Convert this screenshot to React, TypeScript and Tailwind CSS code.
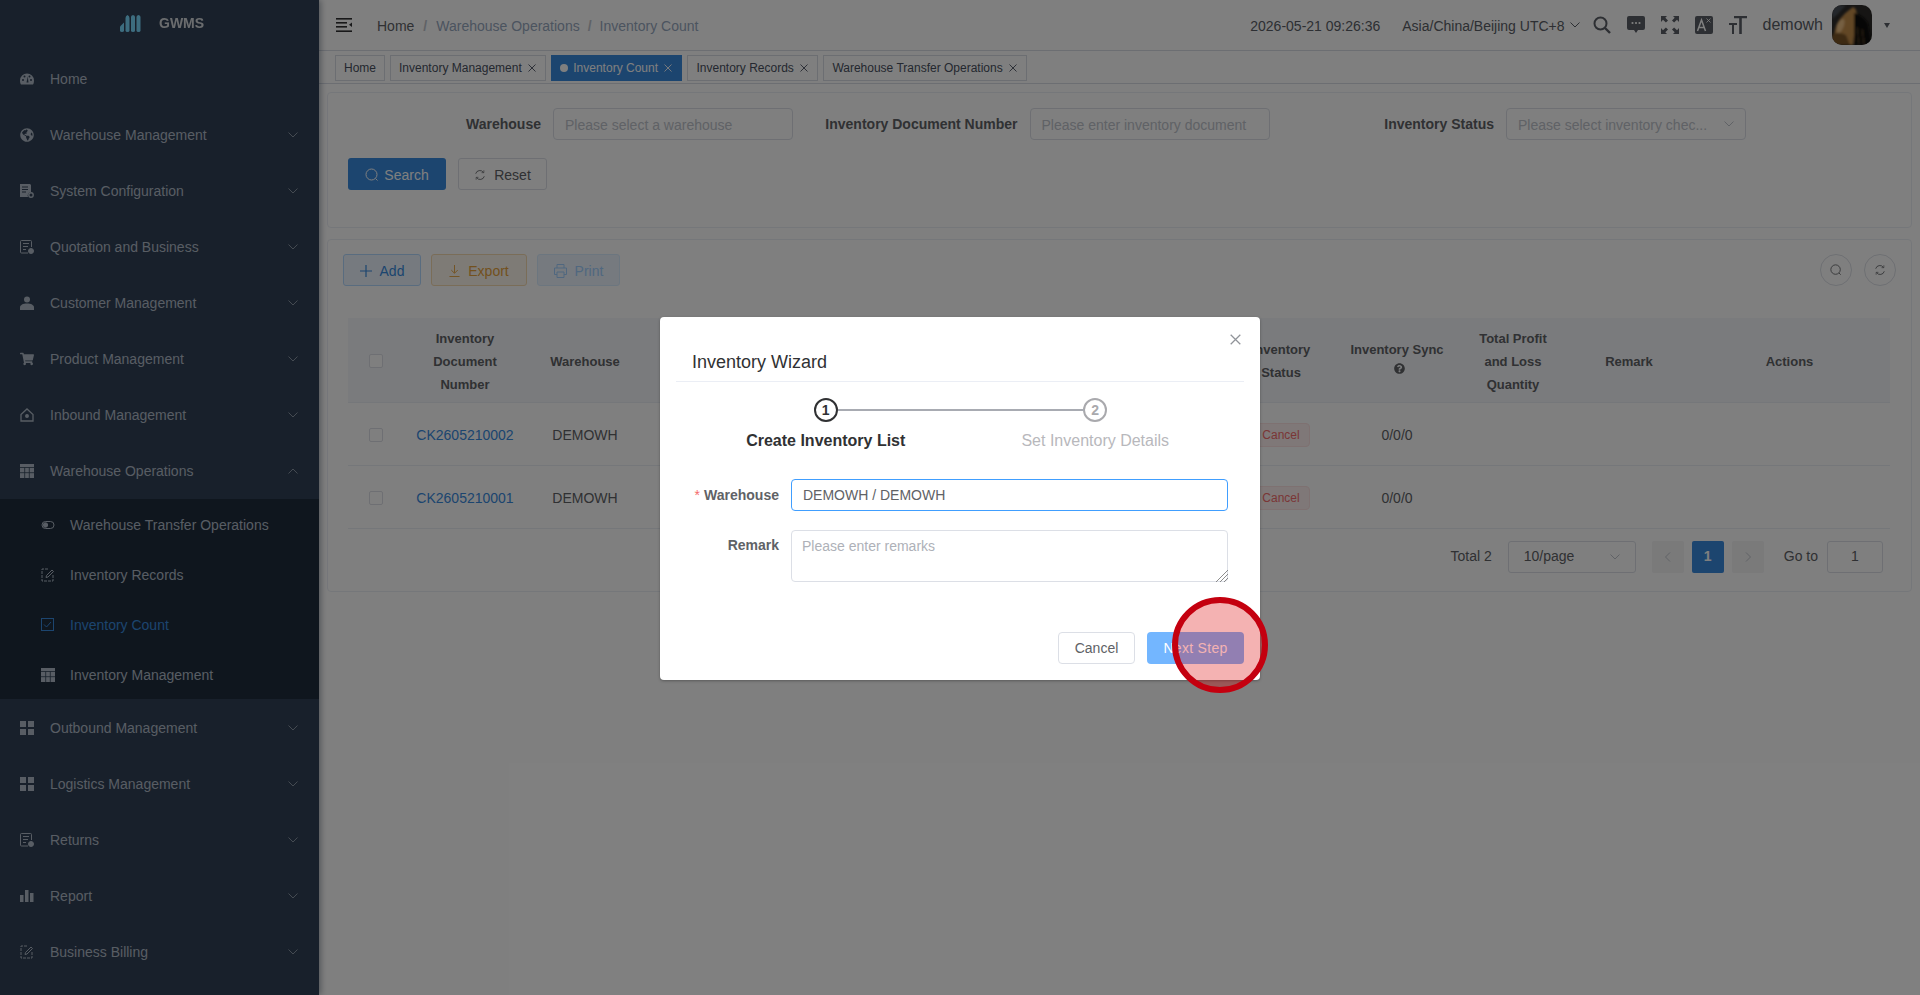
import { ReactNode } from "react";
import { FaGlobeAmericas, FaQuestionCircle, FaShoppingCart } from "react-icons/fa";

// small sidebar glyphs, all on a 14x14 box and drawn with currentColor
function DashIcon() {
  return (
    <svg width="14" height="14" viewBox="0 0 14 14">
      <path d="M7 1.5a7 7 0 0 0-7 7c0 1.5.3 3 1 4h12c.7-1 1-2.500 1-4a7 7 0 0 0-7-7z" fill="currentColor" />
      <circle cx="3" cy="8" r="1" fill="#304156" />
      <circle cx="4.500" cy="4.500" r="1" fill="#304156" />
      <circle cx="9.500" cy="4.500" r="1" fill="#304156" />
      <circle cx="11" cy="8" r="1" fill="#304156" />
      <path d="M7.800 4.500 6.500 10.500h2z" fill="#304156" />
    </svg>
  );
}
function ConfigIcon() {
  return (
    <svg width="14" height="14" viewBox="0 0 14 14">
      <path d="M0 0h10l1 1v7a3.500 3.500 0 0 0-3 5H0z" fill="currentColor" />
      <path d="M2 3h6M2 5.500h6M2 8h4" stroke="#304156" strokeWidth="1" />
      <circle cx="11" cy="11" r="2.200" fill="none" stroke="currentColor" strokeWidth="1.400" />
    </svg>
  );
}
function DocIcon() {
  return (
    <svg width="14" height="14" viewBox="0 0 14 14" fill="none" stroke="currentColor">
      <path d="M8 13H1.500a1 1 0 0 1-1-1V1.500a1 1 0 0 1 1-1h9a1 1 0 0 1 1 1V7" />
      <path d="M3 3.500h6M3 6.500h5M3 9.500h3" />
      <circle cx="11" cy="11" r="2.500" fill="currentColor" />
    </svg>
  );
}
function UserIcon() {
  return (
    <svg width="14" height="14" viewBox="0 0 14 14" fill="currentColor">
      <circle cx="7" cy="3.500" r="3" />
      <path d="M0 14v-2.500C0 9 3 7.500 7 7.500s7 1.500 7 4V14z" />
    </svg>
  );
}
function HouseIcon() {
  return (
    <svg width="14" height="14" viewBox="0 0 14 14" fill="none" stroke="currentColor" strokeWidth="1.300">
      <path d="M1 6.500 7 1l6 5.500V13H1z" />
      <circle cx="7" cy="8" r="1.300" fill="currentColor" />
    </svg>
  );
}
function TableIcon() {
  return (
    <svg width="14" height="14" viewBox="0 0 14 14">
      <path d="M0 0h14v14H0z" fill="currentColor" />
      <path d="M0 3.500h14M0 8.700h14M4.700 3.500V14M9.300 3.500V14" stroke="#304156" strokeWidth=".8" />
    </svg>
  );
}
function GridIcon() {
  return (
    <svg width="14" height="14" viewBox="0 0 14 14" fill="currentColor">
      <rect width="6" height="6" />
      <rect x="8" width="6" height="6" />
      <rect y="8" width="6" height="6" />
      <rect x="8" y="8" width="6" height="6" />
    </svg>
  );
}
function BarsIcon() {
  return (
    <svg width="14" height="14" viewBox="0 0 14 14" fill="currentColor">
      <rect x="0" y="6" width="3.500" height="7" />
      <rect x="5" y="1" width="3.500" height="12" />
      <rect x="10" y="4" width="3.500" height="9" />
    </svg>
  );
}
function EditIcon() {
  return (
    <svg width="14" height="14" viewBox="0 0 14 14" fill="none" stroke="currentColor">
      <path d="M7 1H1v12h11V7" strokeDasharray="3 1" />
      <path d="M5 9.500 5.500 7.500 11 2l1.500 1.500L7 9z" />
    </svg>
  );
}
function ToggleIcon() {
  return (
    <svg width="14" height="14" viewBox="0 0 14 14" fill="none" stroke="currentColor">
      <rect x="1" y="3.500" width="12" height="7" rx="3.500" />
      <circle cx="4.500" cy="7" r="2.200" fill="currentColor" />
    </svg>
  );
}
function CheckBoxIcon() {
  return (
    <svg width="14" height="14" viewBox="0 0 14 14" fill="none" stroke="currentColor">
      <rect x=".5" y=".5" width="12" height="12" />
      <path d="M3 6.500 5.500 9 10 4" />
    </svg>
  );
}
function Chevron({ up = false, className = "" }: { up?: boolean; className?: string }) {
  return (
    <svg width="10" height="6" viewBox="0 0 10 6" fill="none" stroke="currentColor" strokeWidth="1" className={className}>
      <path d={up ? "M.5 5.500 5 1l4.500 4.500" : "M.5.5 5 5 9.500.5"} />
    </svg>
  );
}
function SearchGlyph({ size = 14 }: { size?: number }) {
  return (
    <svg width={size} height={size} viewBox="0 0 14 14" fill="none" stroke="currentColor" strokeWidth="1">
      <circle cx="6.500" cy="6.500" r="5.500" />
      <path d="M10.500 10.500 12.500 12.500" />
    </svg>
  );
}
function RefreshGlyph({ size = 14 }: { size?: number }) {
  return (
    <svg width={size} height={size} viewBox="0 0 14 14" fill="none" stroke="currentColor" strokeWidth="1">
      <path d="M2 5.500A5 5 0 0 1 11 4M12 8.500A5 5 0 0 1 3 10" />
      <path d="M11.500 1.500V4.300H8.800M2.500 12.500V9.700h2.700" strokeWidth=".8" />
    </svg>
  );
}
function CloseGlyph({ size = 8 }: { size?: number }) {
  return (
    <svg width={size} height={size} viewBox="0 0 8 8" fill="none" stroke="currentColor" strokeWidth=".9">
      <path d="M.5.500l7 7M7.500.500l-7 7" />
    </svg>
  );
}

type MenuItem = { label: string; icon: ReactNode; arrow?: boolean };

const topMenu: MenuItem[] = [
  { label: "Home", icon: <DashIcon /> },
  { label: "Warehouse Management", icon: <FaGlobeAmericas size={14} />, arrow: true },
  { label: "System Configuration", icon: <ConfigIcon />, arrow: true },
  { label: "Quotation and Business", icon: <DocIcon />, arrow: true },
  { label: "Customer Management", icon: <UserIcon />, arrow: true },
  { label: "Product Management", icon: <FaShoppingCart size={14} />, arrow: true },
  { label: "Inbound Management", icon: <HouseIcon />, arrow: true },
];

const subMenu: (MenuItem & { active?: boolean })[] = [
  { label: "Warehouse Transfer Operations", icon: <ToggleIcon /> },
  { label: "Inventory Records", icon: <EditIcon /> },
  { label: "Inventory Count", icon: <CheckBoxIcon />, active: true },
  { label: "Inventory Management", icon: <TableIcon /> },
];

const bottomMenu: MenuItem[] = [
  { label: "Outbound Management", icon: <GridIcon />, arrow: true },
  { label: "Logistics Management", icon: <GridIcon />, arrow: true },
  { label: "Returns", icon: <DocIcon />, arrow: true },
  { label: "Report", icon: <BarsIcon />, arrow: true },
  { label: "Business Billing", icon: <EditIcon />, arrow: true },
];

function MenuRow({ item, open, low }: { item: MenuItem; open?: boolean; low?: boolean }) {
  return (
    <div className={`h-[56px] flex items-center pl-[20px] pr-[21px] text-[14px] text-[#b0bbc8] ${low ? "pt-[2px]" : ""}`}>
      <span className="w-[14px] h-[14px] mr-[16px] flex items-center justify-center shrink-0">{item.icon}</span>
      <span className="flex-1">{item.label}</span>
      {item.arrow ? <Chevron up={open} className="text-[#8a96a5]" /> : null}
    </div>
  );
}

function Sidebar() {
  return (
    <aside className="w-[319px] h-full shrink-0 bg-[#304156] overflow-hidden shadow-[2px_0_6px_rgba(0,21,41,0.35)] z-10">
      <div className="h-[51px] pb-[4px] pl-[120px] flex items-center gap-[17px]">
        <svg width="22" height="17" viewBox="0 0 22 17" fill="#7adaff">
          <path d="M0 15.500v-4L4 7.500v8q0 1.500-2 1.500t-2-1.500z" />
          <path d="M5.500 15.500V3q0-2 2-3 2 1 2 3v12.500q0 1.500-2 1.500t-2-1.500z" />
          <path d="M11 15.500V2q0-1.500 2-2 2 .500 2 2v13.500q0 1.500-2 1.500t-2-1.500z" />
          <path d="M16.500 15.500V2q0-1.500 2-2 2 .500 2 2v13.500q0 1.500-2 1.500t-2-1.500z" />
        </svg>
        <span className="text-[14px] font-bold text-white opacity-80">GWMS</span>
      </div>
      {topMenu.map((m) => (
        <MenuRow key={m.label} item={m} />
      ))}
      <MenuRow item={{ label: "Warehouse Operations", icon: <TableIcon />, arrow: true }} open />
      <div className="bg-[#1f2d3d]">
        {subMenu.map((m) => (
          <div
            key={m.label}
            className={`h-[50px] pt-[2px] flex items-center pl-[41px] text-[14px] ${m.active ? "text-[#388ade]" : "text-[#b0bbc8]"}`}
          >
            <span className="w-[14px] h-[14px] mr-[15px] flex items-center justify-center shrink-0">{m.icon}</span>
            {m.label}
          </div>
        ))}
      </div>
      {bottomMenu.map((m) => (
        <MenuRow key={m.label} item={m} low />
      ))}
    </aside>
  );
}

function Avatar() {
  return (
    <div className="w-[40px] h-[40px] ml-[9px] rounded-[10px] overflow-hidden shrink-0">
      <svg width="40" height="40" viewBox="0 0 40 40">
        <defs>
          <filter id="soft">
            <feGaussianBlur stdDeviation="0.9" />
          </filter>
        </defs>
        <rect width="40" height="40" fill="#2c2a28" />
        <g filter="url(#soft)">
          <path d="M0 0h14L6 9 0 14z" fill="#4a5056" />
          <path d="M3 40C1 30 3 20 8 14S16 6 21 2c4 2 4 6 3 12s-2 16-3 26z" fill="#c48e4c" />
          <path d="M5 20c2-4 4-6 6-6s2 5 0 9-4 6-6 4z" fill="#ecc084" />
          <path d="M0 40V30c4-3 10-2 14 0l4 10z" fill="#7a5428" />
          <path d="M22 8c5 1 10 4 14 10l4 22H22z" fill="#0e0c0a" />
          <path d="M25 22l2 18M30 24l2 16" stroke="#5a4426" strokeWidth="1" />
        </g>
      </svg>
    </div>
  );
}

function Header() {
  return (
    <header className="h-[51px] shrink-0 bg-white border-b border-[#d8dce5] flex items-center pl-[17px] pr-[30px]">
      <svg width="16" height="14" viewBox="0 0 16 14" fill="#303133" className="shrink-0">
        <rect width="16" height="1.600" />
        <rect y="4" width="11" height="1.600" />
        <rect y="8" width="11" height="1.600" />
        <rect y="12.400" width="16" height="1.600" />
        <path d="M16 4.500v4.500l-3-2.200z" />
      </svg>
      <div className="ml-[25px] pt-[2px] flex items-center text-[14px] text-[#97a8be]">
        <span className="text-[#606266]">Home</span>
        <span className="mx-[9px] text-[#c0c4cc] font-bold">/</span>
        <span>Warehouse Operations</span>
        <span className="mx-[8px] text-[#c0c4cc] font-bold">/</span>
        <span>Inventory Count</span>
      </div>

      <div className="ml-auto flex items-center text-[14px] text-[#5a5e66]">
        <span className="pt-[2px]">2026-05-21 09:26:36</span>
        <span className="ml-[22px] pt-[2px]">Asia/China/Beijing UTC+8</span>
        <Chevron className="ml-[5px] mr-[13px]" />
        <div className="flex items-center gap-[16px]">
          <svg width="18" height="18" viewBox="0 0 18 18" fill="none" stroke="currentColor" strokeWidth="2">
            <circle cx="7.500" cy="7.500" r="6" />
            <path d="M12 12l5 5" strokeWidth="2.400" />
          </svg>
          <svg width="18" height="18" viewBox="0 0 18 18" fill="currentColor">
            <path d="M2 0h14a2 2 0 0 1 2 2v10a2 2 0 0 1-2 2h-5l-2 3-2-3H2a2 2 0 0 1-2-2V2a2 2 0 0 1 2-2z" />
            <circle cx="5.500" cy="7" r="1.100" fill="#fff" />
            <circle cx="9" cy="7" r="1.100" fill="#fff" />
            <circle cx="12.500" cy="7" r="1.100" fill="#fff" />
          </svg>
          <svg width="18" height="18" viewBox="0 0 18 18" fill="currentColor">
            <path d="M0 0h6L4.300 1.700 7 4.400 4.900 6.500 2 3.800 0 6zM18 0h-6l1.700 1.700L11 4.400l2.100 2.100L16 3.800 18 6zM0 18h6l-1.700-1.700L7 13.600l-2.100-2.100L2 14.200 0 12zM18 18h-6l1.700-1.700L11 13.600l2.100-2.100 2.900 2.700 2-2.200z" />
          </svg>
          <svg width="18" height="18" viewBox="0 0 18 18">
            <rect width="18" height="18" rx="2" fill="currentColor" />
            <path d="M2.500 15 6.500 4l4 11M4 11.500h5" fill="none" stroke="#fff" strokeWidth="1.500" />
            <path d="M11.500 2.500l4 4M15.500 2.500l-4 4" stroke="#fff" strokeWidth=".8" />
          </svg>
          <svg width="18" height="18" viewBox="0 0 18 18" fill="currentColor">
            <path d="M5 0h13v2.200h-5.200V18h-2.600V2.200H5z" />
            <path d="M0 7h8v2H5v9H3V9H0z" />
          </svg>
        </div>
        <span className="ml-[16px] text-[16px]">demowh</span>
        <Avatar />
        <span className="ml-[12px] w-0 h-0 border-x-[3px] border-x-transparent border-t-[5px] border-t-[#5a5e66]" />
      </div>
    </header>
  );
}

const tags = [
  { label: "Inventory Management" },
  { label: "Inventory Count", active: true },
  { label: "Inventory Records" },
  { label: "Warehouse Transfer Operations" },
];

function TagBar() {
  return (
    <div className="h-[33px] shrink-0 bg-white border-b border-[#d8dce5] pl-[16px] pt-[4px] flex items-start gap-[5px] text-[12px]">
      <div className="h-[26px] px-[8px] border border-[#d8dce5] text-[#495060] flex items-center">Home</div>
      {tags.map((t) => (
        <div
          key={t.label}
          className={`h-[26px] pl-[8px] pr-[9.500px] border flex items-center ${
            t.active ? "bg-[#388ade] border-[#388ade] text-white" : "border-[#d8dce5] text-[#495060]"
          }`}
        >
          {t.active ? <span className="w-[8px] h-[8px] rounded-full bg-white mr-[5px]" /> : null}
          {t.label}
          <span className="ml-[6px]">
            <CloseGlyph />
          </span>
        </div>
      ))}
    </div>
  );
}

function FormItem({ label, children }: { label: string; children: ReactNode }) {
  return (
    <div className="flex items-center">
      <label className="w-[200px] pr-[12px] flex justify-end whitespace-nowrap text-[14px] font-bold text-[#606266]">{label}</label>
      {children}
    </div>
  );
}

function FilterCard() {
  return (
    <section className="mx-[8px] mt-[8px] h-[136px] shrink-0 border border-[#ebeef5] rounded-[4px] bg-white">
      <div className="pl-[25px] pt-[15px] flex gap-[36.500px]">
        <FormItem label="Warehouse">
          <input
            readOnly
            placeholder="Please select a warehouse"
            className="w-[240px] h-[32px] px-[11px] pt-[2px] border border-[#dcdfe6] rounded-[4px] text-[14px] placeholder:text-[#c0c4cc]"
          />
        </FormItem>
        <FormItem label="Inventory Document Number">
          <input
            readOnly
            placeholder="Please enter inventory document"
            className="w-[240px] h-[32px] px-[11px] pt-[2px] border border-[#dcdfe6] rounded-[4px] text-[14px] placeholder:text-[#c0c4cc]"
          />
        </FormItem>
        <FormItem label="Inventory Status">
          <div className="w-[240px] h-[32px] pl-[11px] pr-[11px] border border-[#dcdfe6] rounded-[4px] text-[14px] text-[#c0c4cc] flex items-center justify-between">
            <span className="pt-[2px]">Please select inventory chec...</span>
            <Chevron />
          </div>
        </FormItem>
      </div>
      <div className="pl-[20px] mt-[18px] flex gap-[12px]">
        <button className="w-[98px] h-[32px] pt-[2px] bg-[#388ade] text-white rounded-[3px] text-[14px] flex items-center justify-center gap-[5px]">
          <SearchGlyph />
          Search
        </button>
        <button className="w-[89px] h-[32px] pt-[2px] border border-[#dcdfe6] text-[#606266] rounded-[3px] text-[14px] flex items-center justify-center gap-[8px]">
          <RefreshGlyph size={12} />
          Reset
        </button>
      </div>
    </section>
  );
}

const colWidths = [56, 122, 118, 581, 112, 120, 112, 120, 201];

function Checkbox() {
  return <span className="inline-block align-middle w-[14px] h-[14px] border border-[#dcdfe6] bg-white rounded-[2px]" />;
}

const rows = ["CK2605210002", "CK2605210001"];

function DataTable() {
  return (
    <table className="ml-[20px] mt-[32px] w-[1542px] table-fixed border-collapse text-center">
      <colgroup>
        {colWidths.map((w, i) => (
          <col key={i} style={{ width: w }} />
        ))}
      </colgroup>
      <thead>
        <tr className="h-[84px] bg-[#f5f7fa] border-b border-[#ebeef5] text-[13px] font-bold text-[#606266] leading-[23px]">
          <th>
            <Checkbox />
          </th>
          <th className="px-[10px] pt-[3px]">
            Inventory
            <br />
            Document
            <br />
            Number
          </th>
          <th className="pt-[3px]">Warehouse</th>
          <th />
          <th className="pt-[3px]">
            Inventory
            <br />
            Status
          </th>
          <th className="pt-[3px]">
            Inventory Sync
            <br />
            <FaQuestionCircle size={11} className="inline-block align-top mt-[2px] ml-[4px]" />
          </th>
          <th className="pt-[3px]">
            Total Profit
            <br />
            and Loss
            <br />
            Quantity
          </th>
          <th className="pt-[3px]">Remark</th>
          <th className="pt-[3px]">Actions</th>
        </tr>
      </thead>
      <tbody className="text-[14px] text-[#606266]">
        {rows.map((r) => (
          <tr key={r} className="h-[63px] border-b border-[#ebeef5]">
            <td className="pt-[2px]">
              <Checkbox />
            </td>
            <td className="pt-[3px] text-[#388ade]">{r}</td>
            <td className="pt-[3px]">DEMOWH</td>
            <td />
            <td className="pt-[3px]">
              <span className="inline-flex items-center justify-center w-[58px] h-[24px] bg-[#fef0f0] border border-[#fde2e2] rounded-[4px] text-[12px] text-[#f56c6c]">
                Cancel
              </span>
            </td>
            <td className="pt-[3px]">0/0/0</td>
            <td />
            <td />
            <td />
          </tr>
        ))}
      </tbody>
    </table>
  );
}

function Pagination() {
  return (
    <div className="mt-[12px] pr-[28px] flex items-center justify-end text-[14px] text-[#606266]">
      <span>Total 2</span>
      <div className="ml-[16px] w-[128px] h-[32px] px-[15px] border border-[#dcdfe6] rounded-[3px] flex items-center justify-between">
        10/page
        <Chevron className="text-[#c0c4cc]" />
      </div>
      <div className="ml-[16px] w-[32px] h-[32px] bg-[#f4f4f5] rounded-[2px] flex items-center justify-center text-[#c0c4cc]">
        <svg width="6" height="10" viewBox="0 0 6 10" fill="none" stroke="currentColor">
          <path d="M5 .5.5 5 5 9.500" />
        </svg>
      </div>
      <div className="ml-[8px] w-[32px] h-[32px] bg-[#388ade] rounded-[2px] flex items-center justify-center text-white font-bold">1</div>
      <div className="ml-[8px] w-[32px] h-[32px] bg-[#f4f4f5] rounded-[2px] flex items-center justify-center text-[#c0c4cc]">
        <svg width="6" height="10" viewBox="0 0 6 10" fill="none" stroke="currentColor">
          <path d="M1 .5 5.500 5 1 9.500" />
        </svg>
      </div>
      <span className="ml-[20px]">Go to</span>
      <div className="ml-[9px] w-[56px] h-[32px] border border-[#dcdfe6] rounded-[3px] flex items-center justify-center">1</div>
    </div>
  );
}

function ListCard() {
  return (
    <section className="mx-[8px] mt-[11px] h-[353px] shrink-0 border border-[#ebeef5] rounded-[4px] bg-white">
      <div className="pl-[15px] pr-[15px] pt-[14px] flex items-center gap-[10px] text-[14px]">
        <button className="w-[78px] h-[32px] pt-[2px] bg-[#ecf5ff] border border-[#b3d8ff] text-[#388ade] rounded-[3px] flex items-center justify-center gap-[8px]">
          <svg width="12" height="12" viewBox="0 0 12 12" stroke="currentColor" strokeWidth="1.200">
            <path d="M6 0v12M0 6h12" />
          </svg>
          Add
        </button>
        <button className="w-[96px] h-[32px] pt-[2px] bg-[#fdf6ec] border border-[#f5dab1] text-[#e6a23c] rounded-[3px] flex items-center justify-center gap-[8px]">
          <svg width="11" height="12" viewBox="0 0 12 13" fill="none" stroke="currentColor" strokeWidth="1">
            <path d="M6 0v8.500M2.500 5.500 6 9l3.500-3.500M.5 12.500h11" />
          </svg>
          Export
        </button>
        <button className="w-[83px] h-[32px] pt-[2px] bg-[#ecf5ff] border border-[#d9ecff] text-[#a0cfff] rounded-[3px] flex items-center justify-center gap-[8px]">
          <svg width="13" height="14" viewBox="0 0 13 14" fill="none" stroke="currentColor">
            <path d="M3 4V.5h7V4M3 10.500H.5V4h12v6.500H10M3 8h7v5.500H3z" />
          </svg>
          Print
        </button>
        <div className="ml-auto flex gap-[12px] text-[#606266]">
          <div className="w-[32px] h-[32px] border border-[#dcdfe6] rounded-full flex items-center justify-center">
            <SearchGlyph size={12} />
          </div>
          <div className="w-[32px] h-[32px] border border-[#dcdfe6] rounded-full flex items-center justify-center">
            <RefreshGlyph size={12} />
          </div>
        </div>
      </div>
      <DataTable />
      <Pagination />
    </section>
  );
}

function WizardDialog() {
  return (
    <div className="absolute left-[660px] top-[317px] w-[600px] h-[363px] bg-white rounded-[4px] shadow-[0_1px_3px_rgba(0,0,0,0.3)] z-30">
      <span className="absolute right-[19px] top-[17px] text-[#909399]">
        <CloseGlyph size={11} />
      </span>
      <div className="mx-[16px] h-[65px] pl-[16px] pt-[33px] border-b border-[#ebeef5] text-[18px] leading-[24px] text-[#303133]">
        Inventory Wizard
      </div>
      <div className="ml-[31px] w-[539px] pt-[16px] grid grid-cols-2">
        <div className="relative flex flex-col items-center">
          <span className="absolute left-[calc(50%+12px)] top-[11px] w-[246px] h-[2px] bg-[#a8abb2]" />
          <span className="w-[24px] h-[24px] border-2 border-[#303133] rounded-full flex items-center justify-center text-[14px] font-bold text-[#303133]">
            1
          </span>
          <span className="mt-[7px] text-[16px] leading-[24px] font-bold text-[#303133]">Create Inventory List</span>
        </div>
        <div className="flex flex-col items-center">
          <span className="w-[24px] h-[24px] border-2 border-[#a9a9ad] rounded-full flex items-center justify-center text-[14px] font-bold text-[#a9a9ad]">
            2
          </span>
          <span className="mt-[7px] text-[16px] leading-[24px] text-[#b8b8bc]">Set Inventory Details</span>
        </div>
      </div>
      <div className="mt-[26px] flex items-center">
        <label className="w-[119px] text-right text-[14px] font-bold text-[#606266]">
          <span className="text-[#f56c6c] mr-[4px] font-normal">*</span>
          Warehouse
        </label>
        <div className="ml-[12px] w-[437px] h-[32px] px-[11px] border border-[#409eff] rounded-[4px] flex items-center text-[14px] text-[#606266]">
          DEMOWH / DEMOWH
        </div>
      </div>
      <div className="mt-[19px] flex items-start">
        <label className="w-[119px] pt-[5px] text-right text-[14px] font-bold text-[#606266]">Remark</label>
        <div className="relative ml-[12px] w-[437px] h-[52px]">
          <textarea
            readOnly
            placeholder="Please enter remarks"
            className="block w-full h-full resize-none px-[10px] py-[5px] border border-[#dcdfe6] rounded-[4px] text-[14px] placeholder:text-[#aeb1b8]"
          />
          <svg width="12" height="12" viewBox="0 0 12 12" stroke="#707070" strokeWidth=".8" className="absolute right-0 bottom-0">
            <path d="M0 12 12 0M4 12l8-8M8 12l4-4" />
          </svg>
        </div>
      </div>
      <div className="mt-[50px] pr-[16px] flex justify-end gap-[12px] text-[14px]">
        <button className="w-[77px] h-[32px] border border-[#dcdfe6] rounded-[4px] text-[#606266]">Cancel</button>
        <button className="w-[97px] h-[32px] bg-[#73b6ff] rounded-[4px] text-white tracking-[0.3px]">Next Step</button>
      </div>
    </div>
  );
}

export default function App() {
  return (
    <div className="relative w-[1920px] h-[995px] overflow-hidden flex bg-white [font-family:'Liberation_Sans',Arial,sans-serif]">
      <Sidebar />
      <main className="flex-1 min-w-0 flex flex-col">
        <Header />
        <TagBar />
        <FilterCard />
        <ListCard />
      </main>
      <div className="absolute inset-0 bg-black/50 z-20" />
      <WizardDialog />
      {/* click marker from the recording */}
      <span className="absolute left-[1172px] top-[597px] w-[96px] h-[96px] rounded-full border-[6px] border-[#c4000f] bg-[rgba(220,0,0,0.3)] z-40" />
    </div>
  );
}
